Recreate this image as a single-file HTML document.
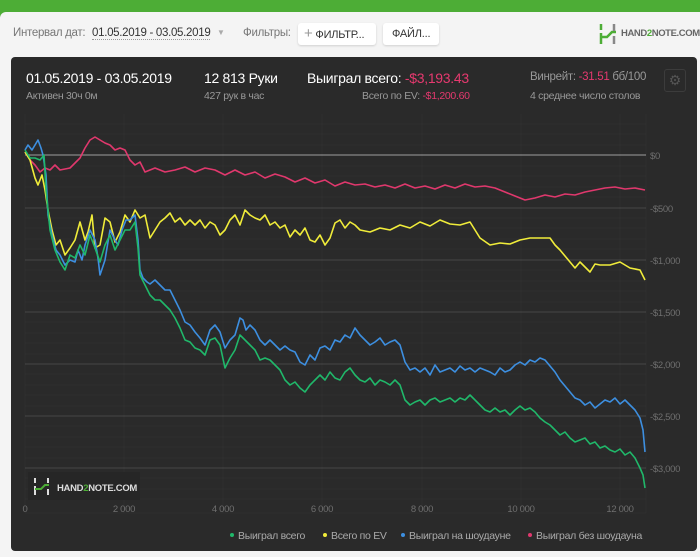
<!DOCTYPE html>
<html><head><meta charset="utf-8"><style>
body{margin:0;width:700px;height:557px;background:#4dad36;font-family:"Liberation Sans",sans-serif;overflow:hidden;position:relative}
.page{position:absolute;left:0;top:12px;width:700px;height:545px;background:#f4f4f4;border-top-left-radius:6px}
.t{position:absolute;white-space:nowrap;letter-spacing:-0.3px}
.btn{position:absolute;background:#fff;border-radius:3px;box-shadow:0 1px 2px rgba(0,0,0,.15);font-size:11px;color:#333;height:22px;line-height:22px;letter-spacing:-0.2px}
.dark{position:absolute;left:11px;top:57px;width:686px;height:494px;background:#2a2a2a;border-radius:4px}
</style></head><body>
<div class="page"></div>
<div class="t" style="left:13px;top:27px;font-size:11.5px;color:#777">Интервал дат:</div>
<div class="t" style="left:92px;top:27px;font-size:11.5px;color:#333;border-bottom:1px dotted #999">01.05.2019 - 03.05.2019</div>
<div class="t" style="left:217px;top:28px;font-size:8px;color:#aaa">▼</div>
<div class="t" style="left:243px;top:27px;font-size:11.5px;color:#777">Фильтры:</div>
<div class="btn" style="left:298px;top:23px;width:78px"><span style="color:#999;font-size:15px;margin-left:6px">+</span> ФИЛЬТР...</div>
<div class="btn" style="left:383px;top:23px;width:56px;padding-left:9px;box-sizing:border-box">ФАЙЛ...</div>
<svg style="position:absolute;left:599px;top:24px" width="18" height="20"><path d="M2 0v6M2 9v11" stroke="#4dad36" stroke-width="2.5" fill="none"/><path d="M2 13h6l5-5h4" stroke="#4dad36" stroke-width="2.5" fill="none"/><path d="M15 0v7M15 12v8" stroke="#888" stroke-width="2.5"/></svg>
<div class="t" style="left:621px;top:28px;font-size:9.5px;color:#666;font-weight:bold;letter-spacing:-0.4px">HAND<span style="color:#4dad36">2</span>NOTE.COM</div>
<div class="dark"></div>
<div class="t" style="left:26px;top:70px;font-size:14px;color:#fff">01.05.2019 - 03.05.2019</div>
<div class="t" style="left:26px;top:90px;font-size:10.5px;color:#999">Активен 30ч 0м</div>
<div class="t" style="left:204px;top:70px;font-size:14px;color:#fff">12 813 Руки</div>
<div class="t" style="left:204px;top:90px;font-size:10.5px;color:#999">427 рук в час</div>
<div class="t" style="left:307px;top:70px;font-size:14px;color:#fff">Выиграл всего: <span style="color:#e6396f">-$3,193.43</span></div>
<div class="t" style="left:362px;top:90px;font-size:10.5px;color:#999">Всего по EV: <span style="color:#e6396f">-$1,200.60</span></div>
<div class="t" style="left:530px;top:71px;font-size:11.5px;color:#999">Винрейт: <span style="color:#e6396f">-31.51</span> бб/100</div>
<div class="t" style="left:530px;top:90px;font-size:10.5px;color:#999">4 среднее число столов</div>
<div style="position:absolute;left:664px;top:69px;width:20px;height:21px;border:1px solid #3c3c3c;border-radius:3px;color:#555;font-size:14px;text-align:center;line-height:20px">⚙</div>
<svg style="position:absolute;left:0;top:0" width="700" height="557">
<g stroke="#2f2f2f" stroke-width="1">
<line x1="25" y1="124" x2="646" y2="124"/><line x1="25" y1="134" x2="646" y2="134"/><line x1="25" y1="145" x2="646" y2="145"/>
<line x1="25" y1="166" x2="646" y2="166"/><line x1="25" y1="176" x2="646" y2="176"/><line x1="25" y1="187" x2="646" y2="187"/><line x1="25" y1="197" x2="646" y2="197"/>
<line x1="25" y1="218" x2="646" y2="218"/><line x1="25" y1="228" x2="646" y2="228"/><line x1="25" y1="239" x2="646" y2="239"/><line x1="25" y1="249" x2="646" y2="249"/>
<line x1="25" y1="270" x2="646" y2="270"/><line x1="25" y1="281" x2="646" y2="281"/><line x1="25" y1="291" x2="646" y2="291"/><line x1="25" y1="302" x2="646" y2="302"/>
<line x1="25" y1="322" x2="646" y2="322"/><line x1="25" y1="333" x2="646" y2="333"/><line x1="25" y1="343" x2="646" y2="343"/><line x1="25" y1="354" x2="646" y2="354"/>
<line x1="25" y1="374" x2="646" y2="374"/><line x1="25" y1="385" x2="646" y2="385"/><line x1="25" y1="395" x2="646" y2="395"/><line x1="25" y1="406" x2="646" y2="406"/>
<line x1="25" y1="426" x2="646" y2="426"/><line x1="25" y1="437" x2="646" y2="437"/><line x1="25" y1="447" x2="646" y2="447"/><line x1="25" y1="458" x2="646" y2="458"/>
<line x1="25" y1="478" x2="646" y2="478"/><line x1="25" y1="489" x2="646" y2="489"/><line x1="25" y1="499" x2="646" y2="499"/><line x1="25" y1="513" x2="646" y2="513"/>
<line x1="25" y1="114" x2="25" y2="513"/><line x1="124" y1="114" x2="124" y2="513"/><line x1="223" y1="114" x2="223" y2="513"/><line x1="322" y1="114" x2="322" y2="513"/><line x1="422" y1="114" x2="422" y2="513"/><line x1="521" y1="114" x2="521" y2="513"/><line x1="620" y1="114" x2="620" y2="513"/><line x1="646" y1="114" x2="646" y2="513"/>
</g>
<g stroke="#424242" stroke-width="1.2">
<line x1="25" y1="208" x2="646" y2="208"/><line x1="25" y1="260" x2="646" y2="260"/><line x1="25" y1="312" x2="646" y2="312"/><line x1="25" y1="364" x2="646" y2="364"/><line x1="25" y1="416" x2="646" y2="416"/><line x1="25" y1="468" x2="646" y2="468"/>
</g>
<line x1="25" y1="155" x2="646" y2="155" stroke="#888" stroke-width="1.3"/>
<g font-size="9.5" fill="#6f6f6f" font-family="Liberation Sans" letter-spacing="-0.3">
<text x="650" y="159">$0</text><text x="650" y="212">-$500</text><text x="650" y="264">-$1,000</text><text x="650" y="316">-$1,500</text><text x="650" y="368">-$2,000</text><text x="650" y="420">-$2,500</text><text x="650" y="472">-$3,000</text>
<g text-anchor="middle"><text x="25" y="512">0</text><text x="124" y="512">2 000</text><text x="223" y="512">4 000</text><text x="322" y="512">6 000</text><text x="422" y="512">8 000</text><text x="521" y="512">10 000</text><text x="620" y="512">12 000</text></g>
</g>
<g fill="none" stroke-width="1.6" stroke-linejoin="round">
<polyline stroke="#e0386d" points="25,152 30,160 35,165 40,172 45,168 50,170 55,165 60,170 70,168 75,163 80,158 85,148 90,140 95,137 100,140 105,143 110,145 115,150 120,148 125,150 130,160 135,165 140,162 145,172 150,170 155,168 165,172 175,170 185,167 195,172 205,168 215,170 225,175 235,170 245,175 255,172 265,178 275,174 285,177 295,182 305,178 315,183 325,180 335,186 345,182 355,185 365,184 375,187 385,185 395,188 405,184 415,188 425,186 435,189 445,185 455,188 465,184 475,187 485,186 495,188 505,192 515,196 525,200 535,198 545,195 555,197 565,194 575,195 585,192 595,190 605,188 615,187 625,189 635,188 645,190"/>
<polyline stroke="#f0ec3a" points="25,152 30,160 35,178 38,185 42,175 45,190 48,210 52,230 56,245 60,240 65,255 70,248 75,240 80,222 85,240 88,232 92,215 95,248 100,245 105,218 110,222 115,242 120,232 125,215 130,222 135,210 140,218 145,215 150,238 155,230 160,222 165,218 170,213 175,222 180,218 185,225 190,220 195,225 200,220 205,228 210,222 215,225 220,235 225,230 230,220 235,215 240,225 245,210 250,215 255,218 260,220 265,215 270,225 275,222 280,228 285,225 290,237 295,230 300,235 305,228 310,240 315,242 320,235 325,245 330,238 335,223 340,220 345,228 350,222 355,225 360,230 370,232 380,228 390,230 400,225 410,228 420,222 430,226 440,220 450,224 460,225 470,222 475,230 480,238 490,245 500,243 510,244 520,240 530,238 540,238 550,238 555,245 560,250 570,262 575,268 580,262 590,272 595,264 600,265 610,265 620,262 630,268 640,270 645,280"/>
<polyline stroke="#3d8fe0" points="25,150 28,145 32,150 38,140 41,148 43,155 46,175 48,215 52,235 56,250 60,255 65,265 70,260 75,262 78,250 82,260 85,245 90,230 95,240 98,258 100,275 105,260 110,230 115,240 118,245 122,230 126,220 130,220 135,215 138,240 140,270 143,278 147,282 150,284 155,280 160,285 165,290 170,290 175,300 180,310 185,322 190,325 195,332 200,338 205,345 210,330 215,325 220,332 225,348 230,340 235,335 240,318 243,320 246,330 250,325 255,330 260,340 265,345 270,340 275,345 280,350 285,346 290,350 295,352 300,362 305,365 310,355 315,360 320,348 325,346 330,350 335,340 340,342 345,335 350,338 355,328 360,335 365,340 370,345 375,342 380,338 385,345 390,342 395,340 400,345 405,362 410,370 415,368 420,372 425,368 430,375 435,365 440,372 445,370 450,368 455,372 460,366 465,370 470,368 475,372 480,368 485,370 490,372 495,375 500,368 505,372 510,370 515,365 520,362 525,365 530,360 535,362 540,358 545,360 550,366 555,372 560,380 565,386 570,392 575,398 580,400 585,405 590,402 595,408 600,404 605,400 610,402 615,398 620,404 625,400 630,405 635,410 640,418 643,430 645,452"/>
<polyline stroke="#20b86a" points="25,150 30,158 35,158 40,160 44,155 46,190 50,230 55,250 60,262 65,270 70,255 75,258 80,245 85,255 90,235 95,248 100,262 105,245 110,235 115,250 120,240 125,230 130,230 135,222 138,248 140,275 145,285 150,295 155,300 160,300 165,305 170,310 175,318 180,328 185,340 190,342 195,348 200,350 205,355 210,340 215,338 220,345 225,368 230,358 235,350 240,335 245,340 250,345 255,350 260,360 265,358 270,360 275,365 280,370 285,380 290,385 295,382 300,388 305,392 310,385 315,380 320,375 325,380 330,372 335,378 340,380 345,372 350,368 355,375 360,380 365,382 370,378 375,385 380,380 385,382 390,385 395,380 400,385 405,400 410,405 415,402 420,400 425,405 430,400 435,398 440,402 445,400 450,398 455,402 460,398 465,400 470,395 475,400 480,405 485,410 490,412 495,408 500,412 505,410 510,415 515,410 520,406 525,410 530,408 535,412 540,418 545,422 550,425 555,430 560,435 565,432 570,438 575,442 580,440 585,438 590,444 595,442 600,448 605,446 610,450 615,452 620,449 625,455 630,452 635,458 640,468 643,475 645,488"/>
</g>
<rect x="28" y="472" width="112" height="28" fill="#262626"/>
<path d="M35 478v5M35 486v9" stroke="#ddd" stroke-width="2"/><path d="M35 489h6l4-4h4" stroke="#4dad36" stroke-width="2" fill="none"/><path d="M48 478v5M48 489v6" stroke="#ddd" stroke-width="2"/>
<text x="57" y="491" font-size="9.5" font-weight="bold" fill="#ddd" font-family="Liberation Sans" letter-spacing="-0.3">HAND<tspan fill="#4dad36">2</tspan>NOTE.COM</text>
<g font-size="10.5" fill="#aaa" font-family="Liberation Sans" letter-spacing="-0.3">
<circle cx="232" cy="535" r="2" fill="#20b86a"/><text x="238" y="539">Выиграл всего</text>
<circle cx="325" cy="535" r="2" fill="#f0ec3a"/><text x="331" y="539">Всего по EV</text>
<circle cx="403" cy="535" r="2" fill="#3d8fe0"/><text x="409" y="539">Выиграл на шоудауне</text>
<circle cx="530" cy="535" r="2" fill="#e0386d"/><text x="536" y="539">Выиграл без шоудауна</text>
</g>
</svg>
</body></html>
